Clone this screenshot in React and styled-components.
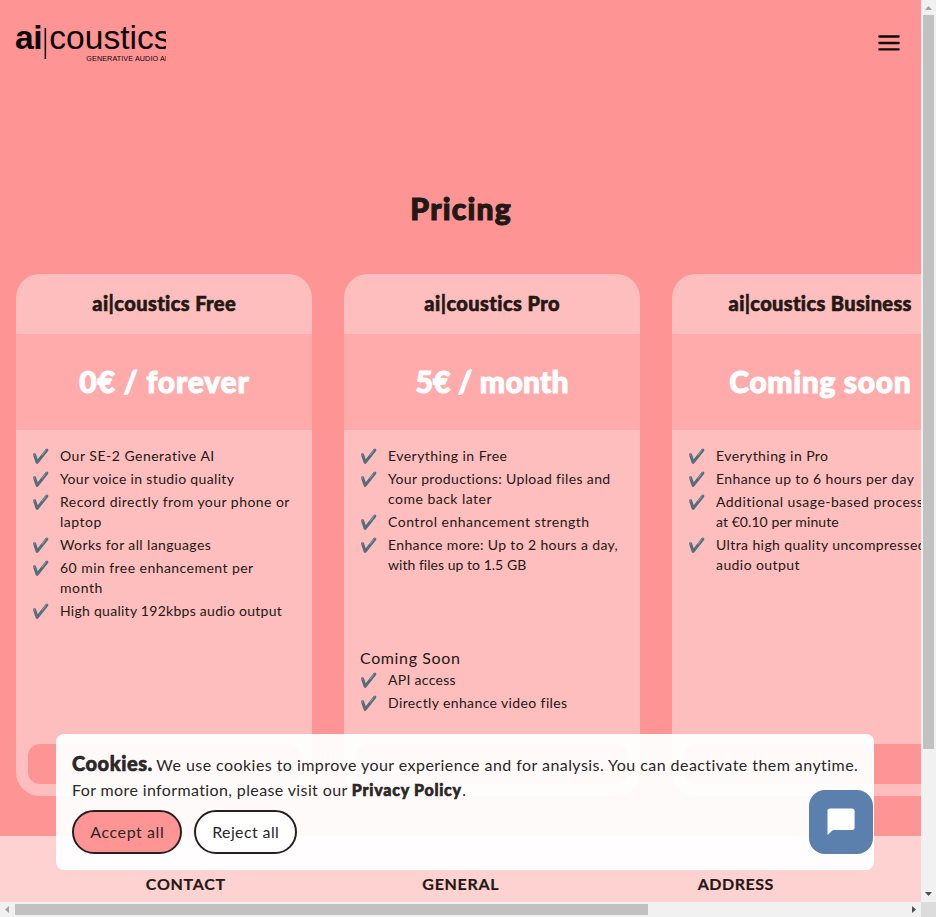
import React from "react";
import styled, { createGlobalStyle } from "styled-components";

const GlobalStyle = createGlobalStyle`
  * { box-sizing: border-box; }
  html, body { margin: 0; padding: 0; overflow: hidden; }
  body { font-family: Lato, sans-serif; color: #231815; }
`;

const Frame = styled.div`
  position: relative;
  display: grid;
  grid-template: 902px 15px / 921px 15px;
  width: 936px;
  height: 917px;
  overflow: hidden;
`;

const Page = styled.main`
  display: flex;
  flex-direction: column;
  min-width: 0;
  overflow: hidden;
  background: #ff9494;
`;

const Header = styled.header`
  display: flex;
  justify-content: space-between;
  align-items: center;
  height: 86px;
  padding: 0 21px 0 15px;
`;

const Logo = styled.svg`
  display: block;
  width: 151px;
  height: 46px;
  overflow: hidden;
  font-family: "Liberation Sans", Arial, sans-serif;
  fill: #0c0505;
`;

const MenuButton = styled.button`
  display: flex;
  padding: 0;
  border: 0;
  background: none;
`;

/* Inline text with its own tracking; the trailing space is taken back so it centres. */
const Label = styled.span`
  letter-spacing: ${(p) => p.$track ?? 0.4}px;
  margin-right: ${(p) => -(p.$track ?? 0.4)}px;
  white-space: nowrap;
`;

const Title = styled.h1`
  margin: 102px 0 0;
  height: 44px;
  line-height: 40px;
  font-size: 30px;
  font-weight: 900;
  text-align: center;
  -webkit-text-stroke: 1.1px currentColor;
`;

const Plans = styled.section`
  display: flex;
  gap: 32px;
  margin-top: 42px;
  padding: 0 16px;
`;

const Card = styled.article`
  display: flex;
  flex-direction: column;
  flex: 0 0 296px;
  height: 522px;
  border-radius: 24px;
  overflow: hidden;
  background: #ffbebe;
`;

const PlanName = styled.h2`
  margin: 0;
  height: 60px;
  line-height: 59px;
  font-size: 20px;
  font-weight: 900;
  text-align: center;
  white-space: nowrap;
  -webkit-text-stroke: 0.6px currentColor;
`;

const Price = styled.div`
  height: 96px;
  line-height: 95px;
  background: #ffabab;
  color: #fff;
  font-size: 30px;
  font-weight: 900;
  text-align: center;
  -webkit-text-stroke: 1.1px currentColor;
`;

const Features = styled.ul`
  display: flex;
  flex-direction: column;
  gap: 3px;
  margin: 0;
  padding: 0 16px;
  list-style: none;
  min-height: ${(p) => (p.$main ? "216px" : "0")};
  padding-top: ${(p) => (p.$main ? "16px" : "0")};
`;

const Feature = styled.li`
  display: grid;
  grid-template-columns: 28px 1fr;
  font-size: 14px;
  line-height: 20px;
`;

const Tick = styled.span`
  font-family: "Noto Color Emoji", sans-serif;
  font-size: 14px;
  line-height: 20px;
`;

const Lines = styled.span`
  display: flex;
  flex-direction: column;
`;

const SoonHeading = styled.div`
  padding: 0 16px;
  font-size: 16px;
  line-height: 24px;
`;

const PlanButton = styled.button`
  flex: 0 0 40px;
  margin: auto 12px 12px;
  border: 0;
  border-radius: 12px;
  background: #ff9494;
`;

const Footer = styled.footer`
  display: grid;
  grid-template-columns: repeat(3, 275px);
  justify-content: center;
  flex: 1;
  margin-top: 40px;
  padding-top: 36px;
  background: #ffd2d2;
  font-size: 16px;
  font-weight: 700;
  line-height: 24px;
  text-align: center;
  -webkit-text-stroke: 0.2px currentColor;
`;

const CookieBanner = styled.aside`
  position: absolute;
  left: 56px;
  top: 734px;
  width: 818px;
  height: 136px;
  padding: 17px 16px 16px;
  border-radius: 8px;
  background: rgba(255, 255, 255, 0.95);
  color: #2b2727;
  font-size: 16px;
`;

const CookieLine = styled.div`
  display: flex;
  align-items: baseline;
  gap: ${(p) => p.$gap};
  height: 25px;
  line-height: ${(p) => p.$leading ?? 25}px;
`;

const Strong = styled(Label)`
  font-size: ${(p) => p.$size}px;
  font-weight: 900;
  -webkit-text-stroke: 0.6px currentColor;
`;

const Actions = styled.div`
  display: flex;
  gap: 12px;
  margin-top: 9px;
`;

const Pill = styled.button`
  width: ${(p) => p.$width}px;
  height: 44px;
  padding: 0 0 2px;
  border: 2px solid #282020;
  border-radius: 22px;
  background: ${(p) => (p.$primary ? "#ff9494" : "#fff")};
  color: inherit;
  font: 400 16px Lato, sans-serif;
`;

const Chat = styled.button`
  position: absolute;
  left: 809px;
  top: 790px;
  width: 64px;
  height: 64px;
  display: grid;
  place-items: center;
  padding: 0;
  border: 0;
  border-radius: 16px;
  background: #5c80ae;
`;

const Track = styled.div`
  display: flex;
  flex-direction: ${(p) => (p.$vertical ? "column" : "row")};
  align-items: center;
  justify-content: space-between;
  background: #f1f1f1;
`;

const Thumb = styled.div`
  width: ${(p) => p.$w}px;
  height: ${(p) => p.$h}px;
  background: #c1c1c1;
  margin-right: ${(p) => (p.$w > 11 ? "auto" : 0)};
  margin-bottom: ${(p) => (p.$w > 11 ? 0 : "auto")};
`;

const Arrow = styled.svg`
  flex: 0 0 15px;
  width: 15px;
  height: 15px;
  fill: ${(p) => (p.$dim ? "#a3a3a3" : "#505050")};
`;

const Corner = styled.div`
  background: #dcdcdc;
`;

const plans = [
  {
    name: "ai|coustics Free", nameTrack: 0.4,
    price: "0€ / forever", priceTrack: 0.83,
    features: [
      [["Our SE-2 Generative AI", 0.5]],
      [["Your voice in studio quality", 0.34]],
      [["Record directly from your phone or", 0.46], ["laptop", 0.5]],
      [["Works for all languages", 0.38]],
      [["60 min free enhancement per", 0.45], ["month", 0.6]],
      [["High quality 192kbps audio output", 0.27]],
    ],
  },
  {
    name: "ai|coustics Pro", nameTrack: 0.43,
    price: "5€ / month", priceTrack: 0.25,
    features: [
      [["Everything in Free", 0.47]],
      [["Your productions: Upload files and", 0.36], ["come back later", 0.48]],
      [["Control enhancement strength", 0.5]],
      [["Enhance more: Up to 2 hours a day,", 0.37], ["with files up to 1.5 GB", 0.03]],
    ],
    soon: [[["API access", 0.3]], [["Directly enhance video files", 0.38]]],
  },
  {
    name: "ai|coustics Business", nameTrack: 0.35,
    price: "Coming soon", priceTrack: 0.65,
    features: [
      [["Everything in Pro", 0.43]],
      [["Enhance up to 6 hours per day", 0.39]],
      [["Additional usage-based processing", 0.47], ["at €0.10 per minute", 0.07]],
      [["Ultra high quality uncompressed", 0.4], ["audio output", 0.42]],
    ],
  },
];

function FeatureList({ items, main }) {
  return (
    <Features $main={main}>
      {items.map((lines) => (
        <Feature key={lines[0][0]}>
          <Tick>✔️</Tick>
          <Lines>
            {lines.map(([text, track]) => (
              <Label key={text} $track={track}>{text}</Label>
            ))}
          </Lines>
        </Feature>
      ))}
    </Features>
  );
}

function Plan({ plan }) {
  return (
    <Card>
      <PlanName><Label $track={plan.nameTrack}>{plan.name}</Label></PlanName>
      <Price><Label $track={plan.priceTrack}>{plan.price}</Label></Price>
      <FeatureList items={plan.features} main />
      {plan.soon && (
        <>
          <SoonHeading><Label $track={0.62}>Coming Soon</Label></SoonHeading>
          <FeatureList items={plan.soon} />
        </>
      )}
      <PlanButton aria-label={plan.name} />
    </Card>
  );
}

export default function App() {
  return (
    <>
      <GlobalStyle />
      <Frame>
        <Page>
          <Header>
            <Logo viewBox="0 0 151 46">
              <text x="0" y="29" fontSize="33.6" fontWeight="700" textLength="27.5">ai</text>
              <rect x="29.6" y="8" width="1.5" height="31" />
              <text x="34.3" y="29" fontSize="33.6">coustics</text>
              <text x="71.3" y="41" fontSize="7.2" textLength="80.5">GENERATIVE AUDIO AI</text>
            </Logo>
            <MenuButton aria-label="Menu">
              <svg width="22" height="16" viewBox="0 0 22 16" stroke="#120606" strokeWidth="2.3" strokeLinecap="round">
                <path d="M1.3 1.5H20.7M1.3 8H20.7M1.3 14.4H20.7" />
              </svg>
            </MenuButton>
          </Header>
          <Title><Label $track={1.22}>Pricing</Label></Title>
          <Plans>
            {plans.map((plan) => <Plan key={plan.name} plan={plan} />)}
          </Plans>
          <Footer>
            <Label $track={0.71}>CONTACT</Label>
            <Label $track={0.71}>GENERAL</Label>
            <Label $track={0.5}>ADDRESS</Label>
          </Footer>
        </Page>
        <Track $vertical>
          <Arrow $dim viewBox="0 0 15 15"><path d="M4 10L7.5 6L11 10Z" /></Arrow>
          <Thumb $w={11} $h={734} />
          <Arrow viewBox="0 0 15 15"><path d="M4 5H11L7.5 9Z" /></Arrow>
        </Track>
        <Track>
          <Arrow $dim viewBox="0 0 15 15"><path d="M9 4V11L5 7.5Z" /></Arrow>
          <Thumb $w={633} $h={11} />
          <Arrow viewBox="0 0 15 15"><path d="M6 4V11L10 7.5Z" /></Arrow>
        </Track>
        <Corner />
        <CookieBanner>
          <CookieLine $gap="4px">
            <Strong $size={20} $track={0.55}>Cookies.</Strong>
            <Label $track={0.445}>
              We use cookies to improve your experience and for analysis. You can deactivate them anytime.
            </Label>
          </CookieLine>
          <CookieLine $gap="0" $leading={27}>
            <Label $track={0.38}>For more information, please visit our</Label>
            <CookieLine as="span" $gap="1px" $leading={27}>
              <Strong $size={16} $track={0.74}>&nbsp;Privacy Policy</Strong>
              <span>.</span>
            </CookieLine>
          </CookieLine>
          <Actions>
            <Pill $width={110} $primary><Label $track={0.57}>Accept all</Label></Pill>
            <Pill $width={103}><Label $track={0.38}>Reject all</Label></Pill>
          </Actions>
        </CookieBanner>
        <Chat aria-label="Open chat">
          <svg width="28" height="28" viewBox="0 0 28 28" fill="#fff">
            <path d="M3 0.5H25Q27.6 0.5 27.6 3V19.5Q27.6 22 25 22H6L0.5 27V3Q0.5 0.5 3 0.5Z" />
          </svg>
        </Chat>
      </Frame>
    </>
  );
}
